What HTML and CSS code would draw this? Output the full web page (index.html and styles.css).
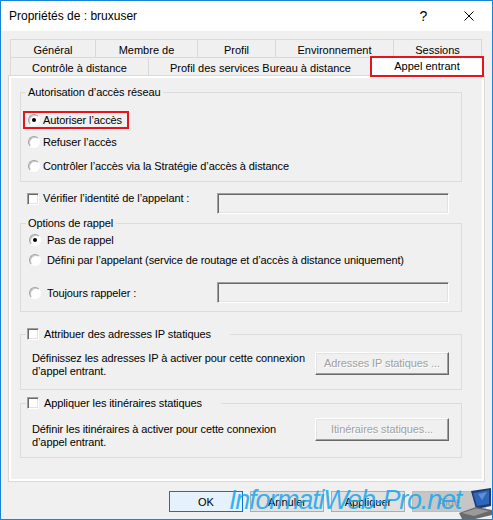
FILE: index.html
```html
<!DOCTYPE html>
<html lang="fr">
<head>
    <meta charset="UTF-8">
    <title>Propriétés de : bruxuser</title>
    <link rel="stylesheet" href="styles.css">
</head>
<body>
    <div class="window">
        <div class="titlebar">
            <span class="title">Propriétés de : bruxuser</span>
            <span class="caption-btn help">?</span>
            <span class="caption-btn close">
                <svg width="10" height="10" viewBox="0 0 10 10"><path d="M0.5 0.5L9.5 9.5M9.5 0.5L0.5 9.5" stroke="#000" stroke-width="1" fill="none"/></svg>
            </span>
        </div>

        <div class="body">
            <div class="tabs">
                <div class="tab-row">
                    <div class="tab" style="width:85px">Général</div>
                    <div class="tab" style="width:102px">Membre de</div>
                    <div class="tab" style="width:78px">Profil</div>
                    <div class="tab" style="width:118px">Environnement</div>
                    <div class="tab last" style="width:89px">Sessions</div>
                </div>
                <div class="tab-row">
                    <div class="tab" style="width:138px">Contrôle à distance</div>
                    <div class="tab" style="width:224px">Profil des services Bureau à distance</div>
                    <div class="tab last selected" style="width:114px">Appel entrant</div>
                </div>
            </div>

            <div class="panel">
                <div class="page">
                    <fieldset class="group access">
                        <legend>Autorisation d’accès réseau</legend>
                        <div class="option"><span class="mark"><span class="radio checked"></span>Autoriser l’accès</span></div>
                        <div class="option"><span class="radio"></span>Refuser l’accès</div>
                        <div class="option"><span class="radio"></span>Contrôler l’accès via la Stratégie d’accès à distance</div>
                    </fieldset>

                    <div class="verify">
                        <span class="check"></span>
                        <span class="label">Vérifier l’identité de l’appelant :</span>
                        <span class="textbox"></span>
                    </div>

                    <fieldset class="group callback">
                        <legend>Options de rappel</legend>
                        <div class="option small"><span class="radio checked"></span>Pas de rappel</div>
                        <div class="option small"><span class="radio"></span>Défini par l’appelant (service de routage et d’accès à distance uniquement)</div>
                        <div class="option small always">
                            <span class="radio"></span><span class="label">Toujours rappeler :</span>
                            <span class="textbox"></span>
                        </div>
                    </fieldset>

                    <fieldset class="group static ip">
                        <legend class="check-legend"><span class="check"></span>Attribuer des adresses IP statiques</legend>
                        <div class="group-row">
                            <div class="desc">Définissez les adresses IP à activer pour cette connexion<br>d’appel entrant.</div>
                            <span class="btn-disabled">Adresses IP statiques ...</span>
                        </div>
                    </fieldset>

                    <fieldset class="group static routes">
                        <legend class="check-legend"><span class="check"></span>Appliquer les itinéraires statiques</legend>
                        <div class="group-row">
                            <div class="desc">Définir les itinéraires à activer pour cette connexion<br>d’appel entrant.</div>
                            <span class="btn-disabled">Itinéraires statiques...</span>
                        </div>
                    </fieldset>
                </div>
            </div>

            <div class="actions">
                <span class="btn default">OK</span>
                <span class="btn">Annuler</span>
                <span class="btn">Appliquer</span>
                <span class="btn help-btn">Aide</span>
            </div>
        </div>

        <!-- watermark laid over the dialog buttons -->
        <div class="watermark">InformatiWeb-Pro.net</div>
        <svg class="laptop" width="34" height="31" viewBox="0 0 34 31">
            <polygon points="13,3 33,0 33,18 18,21" fill="#1b3b7a"/>
            <polygon points="15,5 31,2 31,16 19,18" fill="#2f66b8"/>
            <polygon points="20,6 29,4 24,12" fill="#6fa3e6" opacity="0.7"/>
            <polygon points="1,25 18,19 34,22 34,27 17,31 4,31" fill="#6a6a6a"/>
            <polygon points="4,25 18,20.5 31,23 16,28" fill="#9a9a9a"/>
        </svg>
    </div>
</body>
</html>
```

FILE: styles.css
```css
* {
    box-sizing: border-box;
}
body {
    margin: 0;
    background-color: #fff;
    font-family: "Liberation Sans", Arial, sans-serif;
    font-size: 11px;
    color: #000;
}
.window {
    position: relative;
    width: 493px;
    height: 520px;
    border: 1px solid #1883d7;
    background-color: #f0f0f0;
    overflow: hidden;
}

/* title bar */
.titlebar {
    display: flex;
    align-items: center;
    height: 30px;
    background-color: #fff;
    padding-left: 8px;
    font-size: 12px;
}
.titlebar .title {
    flex: 1;
}
.caption-btn {
    display: flex;
    justify-content: center;
    align-items: center;
    height: 30px;
}
.caption-btn.help {
    width: 45px;
    font-size: 14px;
}
.caption-btn.close {
    width: 46px;
}

.body {
    padding: 8px 0 0 7px;
}

/* tabs */
.tabs {
    margin-left: 2px;
}
.tab-row {
    display: flex;
    height: 18px;
}
.tab {
    flex: none;
    border-top: 1px solid #d9d9d9;
    border-left: 1px solid #d9d9d9;
    background-color: #f0f0f0;
    text-align: center;
    line-height: 20px;
    white-space: nowrap;
}
.tab.last {
    border-right: 1px solid #d9d9d9;
}
.tab.selected {
    margin: -1px -3px -2px -2px;
    height: 21px;
    background-color: #fff;
    line-height: 18px;
    outline: 2px solid #e8141c;
    outline-offset: -2px;
}

/* tab page */
.panel {
    width: 477px;
    height: 407px;
    border: 1px solid #d9d9d9;
    padding: 2px;
    background-color: #fff;
}
.page {
    height: 100%;
    background-color: #f0f0f0;
    padding: 7px 0 0 9px;
    letter-spacing: -0.1px;
}

.group {
    margin: 0;
    padding: 0;
    width: 442px;
    min-width: 0;
    border: 1px solid #dcdcdc;
}
.group legend {
    margin-left: 5px;
    padding: 0 3px 0 2px;
    line-height: 14px;
}
.access {
    padding-top: 7px;
    padding-bottom: 3px;
}
.option {
    display: flex;
    align-items: center;
    height: 24px;
    padding-left: 7px;
    white-space: nowrap;
}
.option.small {
    height: 20px;
    padding-left: 8px;
}
.option.small .radio {
    margin-right: 6px;
}
.option .label {
    flex: 1;
}

.radio {
    position: relative;
    flex: none;
    width: 12px;
    height: 12px;
    margin-right: 3px;
    border-radius: 50%;
    border: 1px solid;
    border-color: #a0a0a0 #fff #fff #a0a0a0;
    background-color: #fff;
    box-shadow: inset 1px 1px 0 #c8c8c8;
}
.radio.checked::after {
    content: "";
    position: absolute;
    left: 3px;
    top: 3px;
    width: 4px;
    height: 4px;
    border-radius: 50%;
    background-color: #000;
}
.mark {
    display: inline-flex;
    align-items: center;
    margin: 4px 0 0 -5px;
    padding: 0 5px 0 3px;
    line-height: 14px;
    border: 2px solid #e8141c;
}

.check {
    flex: none;
    width: 12px;
    height: 12px;
    border: 1px solid;
    border-color: #a0a0a0 #fff #fff #a0a0a0;
    background-color: #fff;
    box-shadow: inset 1px 1px 0 #696969, inset -1px -1px 0 #e3e3e3;
}
.textbox {
    flex: none;
    width: 232px;
    height: 21px;
    border: 1px solid;
    border-color: #a0a0a0 #fff #fff #a0a0a0;
    background-color: #f0f0f0;
    box-shadow: inset 1px 1px 0 #696969, inset -1px -1px 0 #e3e3e3;
}

.verify {
    display: flex;
    align-items: flex-start;
    width: 442px;
    margin-top: 10px;
    padding-left: 7px;
    line-height: 13px;
}
.verify .check {
    margin: 1px 4px 0 0;
}
.verify .label {
    flex: 1;
}
.verify .textbox {
    margin: 1px 13px 0 0;
}

.callback {
    margin-top: 2px;
    padding-bottom: 8px;
}
.option.always {
    height: 21px;
    margin-top: 12px;
}
.option.always .textbox {
    margin-right: 12px;
}

.static .check-legend {
    display: flex;
    align-items: center;
    padding: 0 19px 0 1px;
}
.check-legend .check {
    margin-right: 5px;
}
.ip {
    margin-top: 15px;
}
.routes {
    margin-top: 6px;
}
.group-row {
    display: flex;
    align-items: flex-start;
    line-height: 13px;
}
.ip .group-row {
    padding: 11px 12px 11px 11px;
}
.routes .group-row {
    padding: 8px 12px 8px 11px;
}
.routes .desc {
    margin-top: 5px;
}
.desc {
    flex: 1;
}
.btn-disabled {
    flex: none;
    width: 134px;
    height: 23px;
    display: flex;
    justify-content: center;
    align-items: center;
    border: 1px solid;
    border-color: #fff #696969 #696969 #fff;
    box-shadow: inset -1px -1px 0 #a0a0a0, inset 1px 1px 0 #e3e3e3;
    color: #a0a0a0;
    text-shadow: 1px 1px 0 #fff;
}

/* dialog buttons */
.actions {
    display: flex;
    justify-content: flex-end;
    gap: 7px;
    width: 478px;
    margin-top: 9px;
}
.btn {
    width: 74px;
    height: 21px;
    display: flex;
    justify-content: center;
    align-items: center;
    border: 1px solid #adadad;
    background-color: #e1e1e1;
}
.btn.default {
    border-color: #0078d7;
    background-color: #e5f1fb;
}
.btn.help-btn {
    background-color: #c6c6c6;
    border-color: #bcbcbc;
    color: #9a9a9a;
}

.watermark {
    position: absolute;
    left: 228px;
    top: 484px;
    font-size: 27px;
    font-style: italic;
    letter-spacing: -1.2px;
    color: rgba(24, 166, 238, 0.85);
    white-space: nowrap;
}
.laptop {
    position: absolute;
    right: 0;
    bottom: 0;
}
```
